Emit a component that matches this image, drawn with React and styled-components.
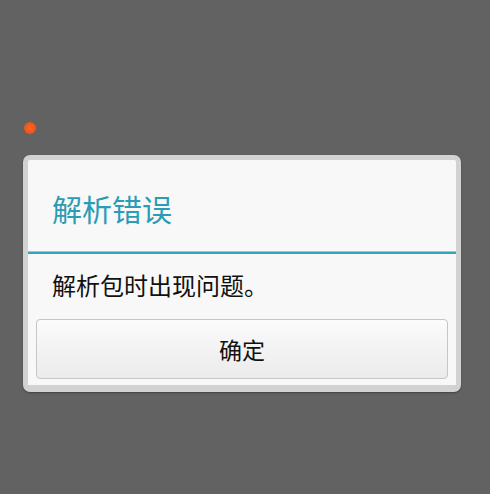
import React from 'react'
import styled, { createGlobalStyle } from 'styled-components'

const Global = createGlobalStyle`
  html, body {
    margin: 0;
    padding: 0;
    background: #626262;
  }
  * { box-sizing: border-box; }
`

const Page = styled.div`
  height: 494px;
  padding: 122px 29px 0 23px;
  background: #626262;
  font-family: "Noto Sans CJK SC", "Noto Sans", sans-serif;
  overflow: hidden;
`

const Dot = styled.div`
  width: 12px;
  height: 12px;
  margin-left: 1px;
  border-radius: 50%;
  background: radial-gradient(circle at 50% 50%, #ff6a2a 0%, #f0561a 55%, #c9542e 100%);
`

const Dialog = styled.div`
  margin-top: 21px;
  width: 438px;
  border-style: solid;
  border-color: #d2d2d2;
  border-width: 5px 5px 7px 5px;
  border-radius: 7px;
  background: #f8f8f8;
  box-shadow: 0 1px 2px rgba(0, 0, 0, 0.35);
`

const Header = styled.div`
  height: 91px;
  display: flex;
  align-items: center;
  padding: 4px 0 0 24px;
`

const Title = styled.h2`
  margin: 0;
  font-size: 30px;
  line-height: 30px;
  font-weight: 400;
  color: #2a9cb6;
`

const Divider = styled.div`
  height: 3px;
  background: #34a3bb;
  border-top: 1px solid #7fd3e2;
`

const Message = styled.p`
  margin: 0;
  height: 65px;
  display: flex;
  align-items: center;
  padding: 0 0 5px 24px;
  font-size: 24px;
  font-weight: 400;
  color: #111;
`

const Actions = styled.div`
  padding: 0 8px 6px 8px;
`

const Button = styled.button`
  width: 100%;
  height: 60px;
  border: 1px solid #c6c6c6;
  border-radius: 4px;
  background: linear-gradient(#fbfbfb, #ebebeb);
  font-family: inherit;
  font-size: 23px;
  font-weight: 400;
  color: #111;
  padding: 0;
`

export default function App() {
  return (
    <>
      <Global />
      <Page>
        <Dot />
        <Dialog>
          <Header>
            <Title>解析错误</Title>
          </Header>
          <Divider />
          <Message>解析包时出现问题。</Message>
          <Actions>
            <Button>确定</Button>
          </Actions>
        </Dialog>
      </Page>
    </>
  )
}
